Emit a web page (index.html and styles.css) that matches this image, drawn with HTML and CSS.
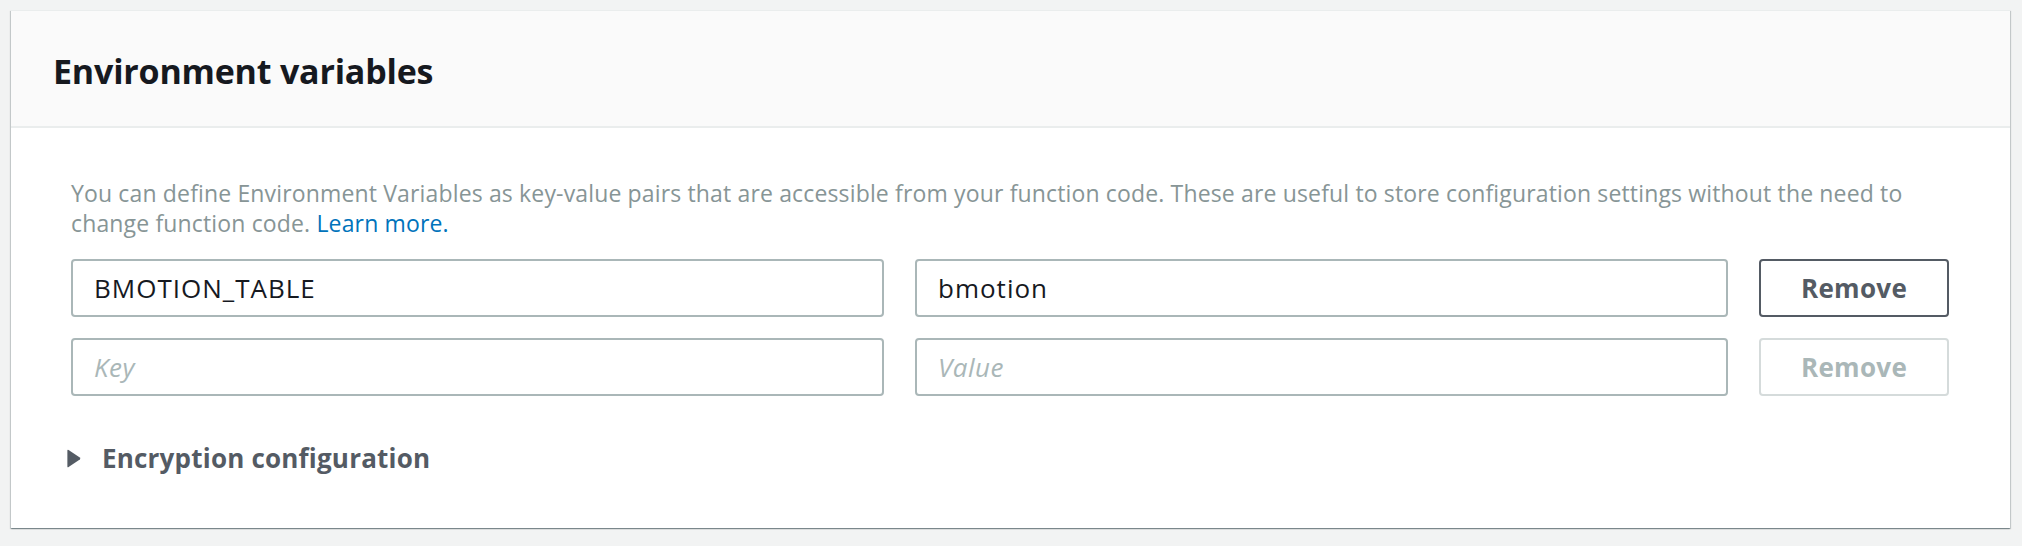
FILE: index.html
```html
<!DOCTYPE html>
<html lang="en">
<head>
<meta charset="utf-8">
<title>Environment variables</title>
<link rel="stylesheet" href="styles.css">
</head>
<body>
<div class="page">
  <section class="card">
    <header class="card-header">
      <h2 class="card-title">Environment variables</h2>
    </header>
    <div class="card-body">
      <p class="desc">You can define Environment Variables as key-value pairs that are accessible from your function code. These are useful to store configuration settings without the need to<br>change function code. <a class="link" href="#">Learn more.</a></p>
      <div class="env-grid">
        <input class="field" type="text" value="BMOTION_TABLE">
        <input class="field" type="text" value="bmotion">
        <button class="btn" type="button">Remove</button>
        <input class="field" type="text" placeholder="Key">
        <input class="field" type="text" placeholder="Value">
        <button class="btn btn-disabled" type="button" disabled>Remove</button>
      </div>
      <div class="expander">
        <svg class="caret" width="14" height="19" viewBox="0 0 14 19"><path d="M1.6 0.9 L12.8 8.6 Q13.8 9.5 12.8 10.4 L1.6 18.1 Q0.4 18.8 0.4 17.4 L0.4 1.6 Q0.4 0.2 1.6 0.9 Z" fill="#545b64"/></svg>
        <span class="expander-label">Encryption configuration</span>
      </div>
    </div>
  </section>
</div>
</body>
</html>
```

FILE: styles.css
```css
html, body {
  margin: 0;
  padding: 0;
  background: #f2f3f3;
}
body {
  font-family: "Open Sans", "Noto Sans", sans-serif;
  width: 2022px;
  height: 546px;
  overflow: hidden;
}
.page {
  padding: 10px 12px 0 11px;
}
.card {
  background: #ffffff;
  box-shadow: 0 1px 1px 0 rgba(0, 28, 36, 0.3), 1px 1px 1px 0 rgba(0, 28, 36, 0.15), -1px 1px 1px 0 rgba(0, 28, 36, 0.15);
  border-top: 1px solid #eaeded;
}
.card-header {
  background: #fafafa;
  height: 115px;
  border-bottom: 2px solid #eaeded;
  display: flex;
  align-items: center;
  padding: 0 42px;
}
.card-title {
  margin: 0;
  padding-top: 4px;
  font-size: 34px;
  font-weight: 700;
  color: #16191f;
  line-height: 40px;
  letter-spacing: -0.2px;
}
.card-body {
  padding: 50px 61px 55px 60px;
}
.desc {
  margin: 0 0 21px 0;
  font-size: 23px;
  line-height: 30px;
  letter-spacing: 0.15px;
  color: #879596;
}
.link {
  display: inline-block;
  color: #0073bb;
  text-decoration: none;
}
.env-grid {
  display: grid;
  grid-template-columns: 1fr 1fr 190px;
  column-gap: 31.5px;
  row-gap: 21px;
}
.field {
  box-sizing: border-box;
  height: 58px;
  width: 100%;
  border: 2px solid #aab7b8;
  border-radius: 4px;
  padding: 0 21px;
  font-family: "Open Sans", sans-serif;
  font-size: 26px;
  letter-spacing: 1px;
  color: #16191f;
  background: #ffffff;
  outline: none;
}
.field::placeholder {
  color: #aab7b8;
  font-style: italic;
  letter-spacing: 0.5px;
}
.btn {
  box-sizing: border-box;
  height: 58px;
  border: 2px solid #545b64;
  border-radius: 4px;
  background: #ffffff;
  font-family: "Open Sans", sans-serif;
  font-size: 26px;
  letter-spacing: 0.3px;
  font-weight: 700;
  color: #545b64;
  padding: 0;
}
.btn-disabled {
  border-color: #d5dbdb;
  color: #aab7b8;
}
.expander {
  margin-top: 47px;
  display: flex;
  align-items: center;
  height: 30px;
  margin-left: -4px;
}
.caret {
  display: block;
  margin-right: 21px;
}
.expander-label {
  font-size: 26px;
  font-weight: 700;
  color: #545b64;
  line-height: 30px;
  letter-spacing: 0.2px;
}
```
